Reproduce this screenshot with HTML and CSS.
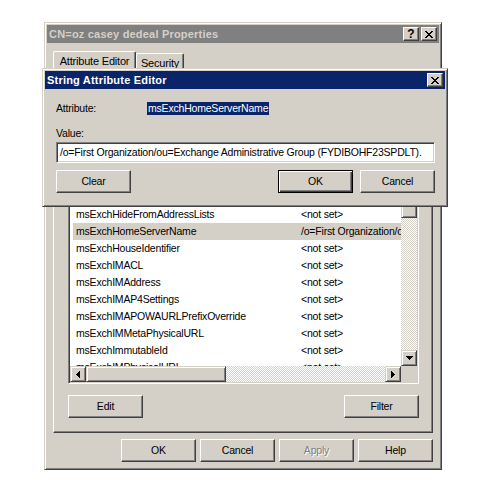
FILE: index.html
```html
<!DOCTYPE html>
<html lang="en">
<head>
    <meta charset="UTF-8">
    <title>CN=oz casey dedeal Properties</title>
    <link rel="stylesheet" href="styles.css">
</head>
<body>

<!-- back window: object properties -->
<div class="window props">
    <div class="titlebar inactive">
        <span class="title">CN=oz casey dedeal Properties</span>
        <div class="cap-buttons">
            <span class="cap-btn help">?</span>
            <span class="cap-btn">
                <svg width="8" height="7" viewBox="0 0 8 7"><path d="M0 0h2v1H0zM6 0h2v1H6zM1 1h2v1H1zM5 1h2v1H5zM2 2h4v1H2zM3 3h2v1H3zM2 4h4v1H2zM1 5h2v1H1zM5 5h2v1H5zM0 6h2v1H0zM6 6h2v1H6z" fill="#000"/></svg>
            </span>
        </div>
    </div>

    <div class="tabs">
        <div class="tab selected">Attribute Editor</div>
        <div class="tab">Security</div>
    </div>

    <div class="tab-page">
        <div class="listview">
            <div class="lv-main">
                <!-- rows above these are scrolled under the editor window -->
                <div class="lv-rows">
                    <div class="row"><span class="col-name">msExchHideFromAddressLists</span><span>&lt;not set&gt;</span></div>
                    <div class="row current"><span class="col-name">msExchHomeServerName</span><span>/o=First Organization/ou=Exchange Administrative Group</span></div>
                    <div class="row"><span class="col-name">msExchHouseIdentifier</span><span>&lt;not set&gt;</span></div>
                    <div class="row"><span class="col-name">msExchIMACL</span><span>&lt;not set&gt;</span></div>
                    <div class="row"><span class="col-name">msExchIMAddress</span><span>&lt;not set&gt;</span></div>
                    <div class="row"><span class="col-name">msExchIMAP4Settings</span><span>&lt;not set&gt;</span></div>
                    <div class="row"><span class="col-name">msExchIMAPOWAURLPrefixOverride</span><span>&lt;not set&gt;</span></div>
                    <div class="row"><span class="col-name">msExchIMMetaPhysicalURL</span><span>&lt;not set&gt;</span></div>
                    <div class="row"><span class="col-name">msExchImmutableId</span><span>&lt;not set&gt;</span></div>
                    <div class="row"><span class="col-name">msExchIMPhysicalURL</span><span>&lt;not set&gt;</span></div>
                </div>
                <div class="vscroll">
                    <div class="sb-btn"></div>
                    <div class="sb-thumb vthumb"></div>
                    <div class="sb-track"></div>
                    <div class="sb-btn">
                        <svg width="7" height="4" viewBox="0 0 7 4"><path d="M0 0h7v1H0zM1 1h5v1H1zM2 2h3v1H2zM3 3h1v1H3z" fill="#000"/></svg>
                    </div>
                </div>
            </div>
            <div class="hscroll-row">
                <div class="hscroll">
                    <div class="sb-btn">
                        <svg width="4" height="7" viewBox="0 0 4 7"><path d="M3 0h1v7H3zM2 1h1v5H2zM1 2h1v3H1zM0 3h1v1H0z" fill="#000"/></svg>
                    </div>
                    <div class="sb-thumb hthumb"></div>
                    <div class="sb-track"></div>
                    <div class="sb-btn">
                        <svg width="4" height="7" viewBox="0 0 4 7"><path d="M0 0h1v7H0zM1 1h1v5H1zM2 2h1v3H2zM3 3h1v1H3z" fill="#000"/></svg>
                    </div>
                </div>
                <div class="corner"></div>
            </div>
        </div>
        <div class="page-buttons">
            <div class="btn">Edit</div>
            <div class="btn">Filter</div>
        </div>
    </div>

    <div class="dialog-buttons">
        <div class="btn">OK</div>
        <div class="btn">Cancel</div>
        <div class="btn disabled">Apply</div>
        <div class="btn">Help</div>
    </div>
</div>

<!-- front window: string editor -->
<div class="window editor">
    <div class="titlebar">
        <span class="title">String Attribute Editor</span>
        <div class="cap-buttons">
            <span class="cap-btn">
                <svg width="8" height="7" viewBox="0 0 8 7"><path d="M0 0h2v1H0zM6 0h2v1H6zM1 1h2v1H1zM5 1h2v1H5zM2 2h4v1H2zM3 3h2v1H3zM2 4h4v1H2zM1 5h2v1H1zM5 5h2v1H5zM0 6h2v1H0zM6 6h2v1H6z" fill="#000"/></svg>
            </span>
        </div>
    </div>
    <div class="editor-body">
        <div class="attr-row">
            <span class="attr-label">Attribute:</span>
            <span class="attr-name">msExchHomeServerName</span>
        </div>
        <div class="value-label">Value:</div>
        <div class="textbox">/o=First Organization/ou=Exchange Administrative Group (FYDIBOHF23SPDLT).</div>
        <div class="editor-buttons">
            <div class="btn">Clear</div>
            <div class="spacer"></div>
            <div class="btn default">OK</div>
            <div class="btn">Cancel</div>
        </div>
    </div>
</div>

</body>
</html>
```

FILE: styles.css
```css
/* classic windows dialogs */
* {
    box-sizing: border-box;
}
body {
    margin: 0;
    background-color: #fff;
    font-family: "Liberation Sans", Arial, sans-serif;
    font-size: 10.5px;
    letter-spacing: -0.2px;
    line-height: 13px;
    color: #000;
}
.window {
    position: absolute;
    display: flex;
    flex-direction: column;
    background-color: #d4d0c8;
    border: 1px solid;
    border-color: #d4d0c8 #404040 #404040 #d4d0c8;
    box-shadow: inset 1px 1px #fff, inset -1px -1px #808080;
    padding: 2px;
}
.props {
    left: 44px;
    top: 22px;
    width: 398px;
    height: 448px;
}
.editor {
    left: 42px;
    top: 68px;
    width: 406px;
    height: 139px;
}
.titlebar {
    height: 18px;
    flex: none;
    display: flex;
    align-items: center;
    justify-content: space-between;
    padding: 0 2px;
    background-color: #0a246a;
    color: #fff;
    font-weight: bold;
}
.titlebar.inactive {
    background-color: #808080;
    color: #d4d0c8;
}
.title {
    font-size: 11px;
    letter-spacing: 0.2px;
}
.cap-buttons {
    display: flex;
    gap: 2px;
}
.cap-btn {
    width: 16px;
    height: 14px;
    display: flex;
    align-items: center;
    justify-content: center;
    background-color: #d4d0c8;
    border: 1px solid;
    border-color: #fff #404040 #404040 #fff;
    box-shadow: inset -1px -1px #808080;
    color: #000;
}
.cap-btn.help {
    font-size: 12px;
    font-weight: bold;
    letter-spacing: 0;
}

/* tabs */
.tabs {
    display: flex;
    align-items: flex-end;
    height: 18px;
    margin: 8px 0 0 6px;
    flex: none;
}
.tab {
    height: 16px;
    width: 48px;
    padding-top: 3px;
    font-size: 11px;
    text-align: center;
    border: 1px solid;
    border-bottom: none;
    border-color: #fff #404040 #404040 #fff;
    box-shadow: inset -1px 0 #808080;
    border-radius: 2px 2px 0 0;
}
.tab.selected {
    height: 18px;
    width: 83px;
    padding-top: 3px;
}
.tab-page {
    flex: 1;
    min-height: 0;
    display: flex;
    flex-direction: column;
    margin: 0 6px;
    border: 1px solid;
    border-color: #fff #404040 #404040 #fff;
    box-shadow: inset -1px -1px #808080;
    padding: 15px 13px 14px 14px;
}

/* list view */
.listview {
    flex: 1;
    min-height: 0;
    display: flex;
    flex-direction: column;
    border: 1px solid;
    border-color: #808080 #fff #fff #808080;
    box-shadow: inset 1px 1px #404040, inset -1px -1px #d4d0c8;
    padding: 1px;
}
.lv-main {
    flex: 1;
    min-height: 0;
    display: flex;
}
.lv-rows {
    flex: 1;
    min-width: 0;
    overflow: hidden;
    background-color: #fff;
    padding: 119px 0 0 3px;
}
.row {
    height: 17px;
    display: flex;
    align-items: center;
    padding-left: 3px;
    white-space: nowrap;
    overflow: hidden;
}
.row.current {
    background-color: #d4d0c8;
}
.col-name {
    width: 225px;
    flex: none;
}
.vscroll {
    width: 16px;
    display: flex;
    flex-direction: column;
}
.hscroll-row {
    height: 16px;
    flex: none;
    display: flex;
}
.hscroll {
    flex: 1;
    display: flex;
}
.corner {
    width: 16px;
    background-color: #d4d0c8;
}
.sb-btn,
.sb-thumb {
    flex: none;
    width: 16px;
    height: 16px;
    display: flex;
    align-items: center;
    justify-content: center;
    background-color: #d4d0c8;
    border: 1px solid;
    border-color: #d4d0c8 #404040 #404040 #d4d0c8;
    box-shadow: inset 1px 1px #fff, inset -1px -1px #808080;
}
.vthumb {
    height: 115px;
}
.hthumb {
    width: 140px;
}
.sb-track {
    flex: 1;
    background: repeating-conic-gradient(#d4d0c8 0 25%, #fff 0 50%) 0 0 / 2px 2px;
}

/* buttons */
.btn {
    width: 75px;
    height: 23px;
    flex: none;
    display: flex;
    align-items: center;
    justify-content: center;
    background-color: #d4d0c8;
    border: 1px solid;
    border-color: #fff #404040 #404040 #fff;
    box-shadow: inset -1px -1px #808080;
}
.btn.default {
    border-color: #000;
    box-shadow: inset 1px 1px #fff, inset -1px -1px #404040, inset -2px -2px #808080;
}
.btn.disabled {
    color: #808080;
    text-shadow: 1px 1px #fff;
}
.page-buttons {
    display: flex;
    justify-content: space-between;
    margin-top: 11px;
    flex: none;
}
.dialog-buttons {
    display: flex;
    justify-content: flex-end;
    gap: 4px;
    margin: 6px 6px 5px 0;
    flex: none;
}

/* string editor */
.editor-body {
    display: flex;
    flex-direction: column;
    padding: 13px 10px 11px 11px;
}
.attr-row {
    display: flex;
    height: 13px;
}
.attr-label {
    width: 91px;
}
.attr-name {
    background-color: #0a246a;
    color: #fff;
    padding: 0 1px;
}
.value-label {
    margin-top: 12px;
    height: 13px;
}
.textbox {
    margin-top: 2px;
    height: 21px;
    display: flex;
    align-items: center;
    background-color: #fff;
    border: 1px solid;
    border-color: #808080 #fff #fff #808080;
    box-shadow: inset 1px 1px #404040, inset -1px -1px #d4d0c8;
    padding: 0 3px;
    white-space: nowrap;
    overflow: hidden;
}
.editor-buttons {
    display: flex;
    gap: 7px;
    margin-top: 7px;
}
.spacer {
    flex: 1;
}
```
